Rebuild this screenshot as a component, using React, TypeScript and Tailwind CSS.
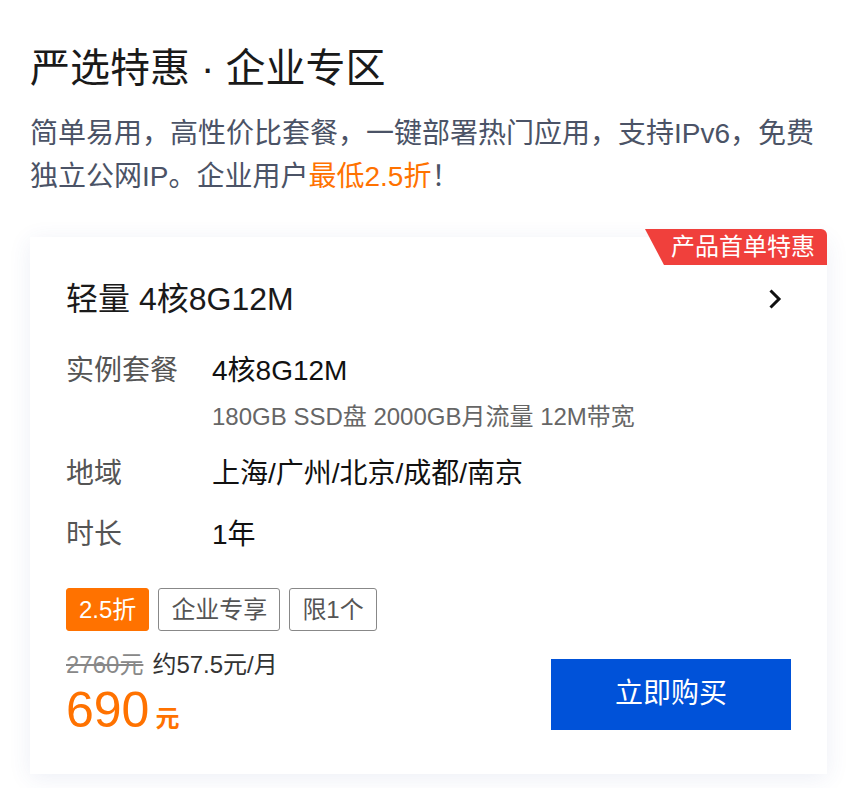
const FONT = { fontFamily: '"Liberation Sans", "Noto Sans CJK SC", sans-serif' };

function Row({ label, children }: { label: string; children: React.ReactNode }) {
  return (
    <div className="flex">
      <div className="w-[146px] shrink-0 text-[28px] leading-[40px] text-[#555]">{label}</div>
      <div className="min-w-0">{children}</div>
    </div>
  );
}

export default function App() {
  return (
    <div className="min-h-[788px] bg-white px-[30px] pt-[40px] pb-[14px]" style={FONT}>
      <h1 className="text-[40px] leading-[56px] font-normal text-[#1a1a1a]">严选特惠 · 企业专区</h1>
      <p className="mt-[16px] text-[28px] leading-[43px] text-[#4b5366]">
        简单易用，高性价比套餐，一键部署热门应用，支持IPv6，免费
        <br />
        独立公网IP。企业用户<span className="text-[#ff7200]">最低2.5折</span>！
      </p>

      <div className="relative mt-[39px] bg-white px-[36px] pt-[42px] pb-[36px] shadow-[0_4px_22px_rgba(50,80,160,0.09)]">
        <div
          className="absolute right-0 top-[-8px] flex h-[36px] items-center rounded-tr-[6px] bg-[#f0403c] pl-[26px] pr-[12px] text-[24px] leading-[36px] text-white"
          style={{ clipPath: "polygon(0 0, 100% 0, 100% 100%, 19px 100%, 0 0)" }}
        >
          产品首单特惠
        </div>

        <div className="flex items-center justify-between">
          <div className="text-[32px] leading-[40px] text-[#1a1a1a]">轻量 4核8G12M</div>
          <svg width="24" height="24" viewBox="0 0 24 24" fill="none" className="mr-[4px]">
            <path d="M7.5 3.5l8.5 8.5-8.5 8.5" stroke="#111" strokeWidth="3" />
          </svg>
        </div>

        <div className="mt-[32px] flex flex-col gap-[21px]">
          <Row label="实例套餐">
            <div className="text-[28px] leading-[40px] text-[#111]">4核8G12M</div>
            <div className="mt-[10px] text-[24px] leading-[32px] text-[#666]">180GB SSD盘 2000GB月流量 12M带宽</div>
          </Row>
          <Row label="地域">
            <div className="text-[28px] leading-[40px] text-[#111]">上海/广州/北京/成都/南京</div>
          </Row>
          <Row label="时长">
            <div className="text-[28px] leading-[40px] text-[#111]">1年</div>
          </Row>
        </div>

        <div className="mt-[33px] flex gap-[9px] text-[24px] leading-[41px]">
          <span className="rounded-[3px] border border-[#ff7200] bg-[#ff7200] px-[12px] text-white">2.5折</span>
          <span className="rounded-[3px] border border-[#888] px-[12px] text-[#555]">企业专享</span>
          <span className="rounded-[3px] border border-[#888] px-[12px] text-[#555]">限1个</span>
        </div>

        <div className="mt-[19px] flex items-center justify-between">
          <div>
            <div className="text-[24px] leading-[30px]">
              <span className="text-[#888] line-through">2760元</span>
              <span className="ml-[9px] text-[#333]">约57.5元/月</span>
            </div>
            <div className="mt-[2px] flex items-baseline text-[#ff7200]">
              <span className="text-[50px] leading-[56px]">690</span>
              <span className="ml-[6px] text-[24px] font-bold">元</span>
            </div>
          </div>
          <button className="flex h-[71px] w-[240px] items-center justify-center bg-[#0052d9] text-[28px] text-white">
            立即购买
          </button>
        </div>
      </div>
    </div>
  );
}
